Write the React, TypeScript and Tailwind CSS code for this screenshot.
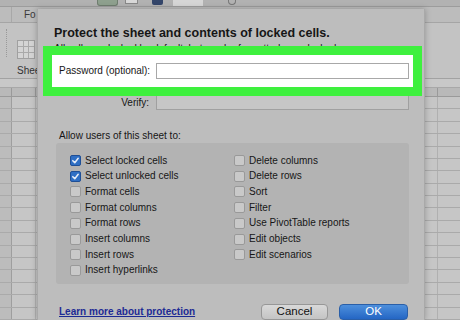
import React from "react";

const leftItems = [
  { label: "Select locked cells", checked: true },
  { label: "Select unlocked cells", checked: true },
  { label: "Format cells", checked: false },
  { label: "Format columns", checked: false },
  { label: "Format rows", checked: false },
  { label: "Insert columns", checked: false },
  { label: "Insert rows", checked: false },
  { label: "Insert hyperlinks", checked: false },
];

const rightItems = [
  "Delete columns",
  "Delete rows",
  "Sort",
  "Filter",
  "Use PivotTable reports",
  "Edit objects",
  "Edit scenarios",
];

function Checkbox({ checked }: { checked: boolean }) {
  if (checked) {
    return (
      <span className="flex items-center justify-center w-[11px] h-[11px] rounded-[2px] bg-[#2f6fc4] border border-[#1f4f96] shrink-0">
        <svg width="9" height="9" viewBox="0 0 10 10">
          <path d="M2 5.2 L4.2 7.4 L8 2.6" fill="none" stroke="#e8eef8" strokeWidth="1.7" strokeLinecap="round" strokeLinejoin="round" />
        </svg>
      </span>
    );
  }
  return <span className="w-[11px] h-[11px] rounded-[2px] bg-[#c9c9c9] border border-[#999] shrink-0" />;
}

function Row({ label, checked }: { label: string; checked: boolean }) {
  return (
    <div className="flex items-center gap-[4px] h-[15.7px] text-[10px] leading-none whitespace-nowrap">
      <Checkbox checked={checked} />
      <span>{label}</span>
    </div>
  );
}

function ExcelBackground() {
  const rows = Array.from({ length: 18 });
  return (
    <div className="flex flex-col h-full">
      {/* window toolbar */}
      <div className="h-[9px] bg-[#b2b2b2] border-b border-[#9c9c9c] flex items-start">
        <div className="ml-[97px] w-[21px] h-[6px] rounded-b-[3px] bg-[#8ea08e] border border-[#6f7d6f] border-t-0" />
        <div className="ml-[7px] w-[13px] h-[4px] bg-[#d8d8d8] border border-[#888] border-t-0" />
        <div className="ml-[14px] w-[11px] h-[5px] bg-[#34466a] rounded-b-[2px]" />
        <div className="ml-[10px] w-[30px] h-[6px] bg-[#d6d6d6]" />
        <div className="ml-[25px] w-[8px] h-[5px] rounded-b-full border border-[#777] border-t-0" />
      </div>
      {/* ribbon tabs */}
      <div className="h-[18px] bg-[#bcbcbc] border-b border-[#a5a5a5] flex items-center text-[10px] text-[#3a3a3a]">
        <div className="w-[12px] h-full border-r border-[#a8a8a8]" />
        <span className="ml-[12px]">Fo</span>
      </div>
      {/* ribbon body */}
      <div className="h-[62px] bg-[#c3c3c3] border-b border-[#a2a2a2] flex">
        <div className="w-[7px] mt-[6px] h-[28px] border-r border-dotted border-[#999]" />
        <div className="ml-[10px] flex flex-col items-start">
          <div className="mt-[17px] w-[18px] h-[19px] grid grid-cols-3 gap-[1px] bg-[#a9a9a9] border border-[#a0a0a0]">
            {Array.from({ length: 9 }).map((_, i) => (
              <div key={i} className="bg-[#d4d4d4]" />
            ))}
          </div>
          <span className="mt-[4px] text-[10px] text-[#333]">Shee</span>
        </div>
      </div>
      {/* formula bar */}
      <div className="h-[12px] bg-[#c8c8c8] border-b border-[#a8a8a8]" />
      {/* column headers */}
      <div className="h-[11px] bg-[#b9b9b9] border-b border-[#9a9a9a] flex">
        <div className="w-[12px] border-r border-[#9a9a9a]" />
        <div className="w-[24px] border-r border-[#9a9a9a]" />
        <div className="w-[402px] border-r border-[#9a9a9a]" />
      </div>
      {/* grid */}
      <div className="flex-1 bg-[#c6c6c6] flex flex-col">
        {rows.map((_, i) => (
          <div key={i} className="h-[12.4px] border-b border-[#aaaaaa] flex shrink-0">
            <div className="w-[12px] bg-[#bcbcbc] border-r border-[#9e9e9e]" />
            <div className="w-[24px] border-r border-[#b0b0b0]" />
            <div className="w-[402px] border-r border-[#b0b0b0]" />
          </div>
        ))}
      </div>
    </div>
  );
}

export default function App() {
  return (
    <div className="relative w-[460px] h-[320px] overflow-hidden bg-[#c4c4c4] font-['Liberation_Sans',Arial,sans-serif] text-[#161616]">
      <ExcelBackground />

      {/* protect sheet dialog */}
      <div className="absolute left-[37px] top-[9px] w-[388px] bottom-0 bg-[#bdbdbd] border-l border-r border-[#a9a9a9] shadow-[0_0_6px_rgba(0,0,0,0.25)] flex flex-col">
        <div className="pl-[16px] pt-[17px] text-[12.5px] font-bold leading-[14px]">
          Protect the sheet and contents of locked cells.
        </div>
        <div className="pl-[16px] pt-[3px] text-[10px] leading-[12px] h-[13px] overflow-hidden whitespace-nowrap">
          All cells are locked by default, but can be formatted as unlocked.
        </div>

        {/* highlighted password row */}
        <div className="relative ml-[5px] -mt-[7px] w-[379px] h-[50px] border-[9px] border-[#3ef03e] bg-white flex items-center">
          <span className="w-[104px] pl-[7px] text-[10px] leading-none whitespace-nowrap">Password (optional):</span>
          <div className="w-[253px] h-[16px] border border-[#a8a8a8] bg-white" />
        </div>

        <div className="flex items-center h-[14px]">
          <span className="w-[111px] text-right text-[10px] leading-none">Verify:</span>
          <div className="ml-[7px] w-[253px] h-[14px] border border-[#a0a0a0] border-t-0 bg-[#c6c6c6]" />
        </div>

        <div className="pl-[21px] mt-[20px] text-[10px] leading-[12px]">Allow users of this sheet to:</div>

        <div className="ml-[18px] mt-[1px] w-[353px] h-[142px] bg-[#b3b3b3] rounded-[3px] pt-[10px] pl-[14px] flex">
          <div className="w-[164px] flex flex-col">
            {leftItems.map((item) => (
              <Row key={item.label} label={item.label} checked={item.checked} />
            ))}
          </div>
          <div className="flex flex-col">
            {rightItems.map((label) => (
              <Row key={label} label={label} checked={false} />
            ))}
          </div>
        </div>

        <div className="mt-[20px] flex items-center pl-[21px] pr-[16px]">
          <a className="text-[10px] font-bold text-[#1c2a94] underline leading-none">Learn more about protection</a>
          <div className="ml-auto flex gap-[11px]">
            <button className="w-[67px] h-[16px] rounded-[4px] border border-[#979797] bg-gradient-to-b from-[#d9d9d9] to-[#c4c4c4] text-[11.5px] leading-none text-[#111]">
              Cancel
            </button>
            <button className="w-[69px] h-[16px] rounded-[4px] border border-[#2a5fa8] bg-gradient-to-b from-[#4d8fdc] to-[#2466c4] text-[11.5px] leading-none text-white">
              OK
            </button>
          </div>
        </div>
      </div>
    </div>
  );
}
